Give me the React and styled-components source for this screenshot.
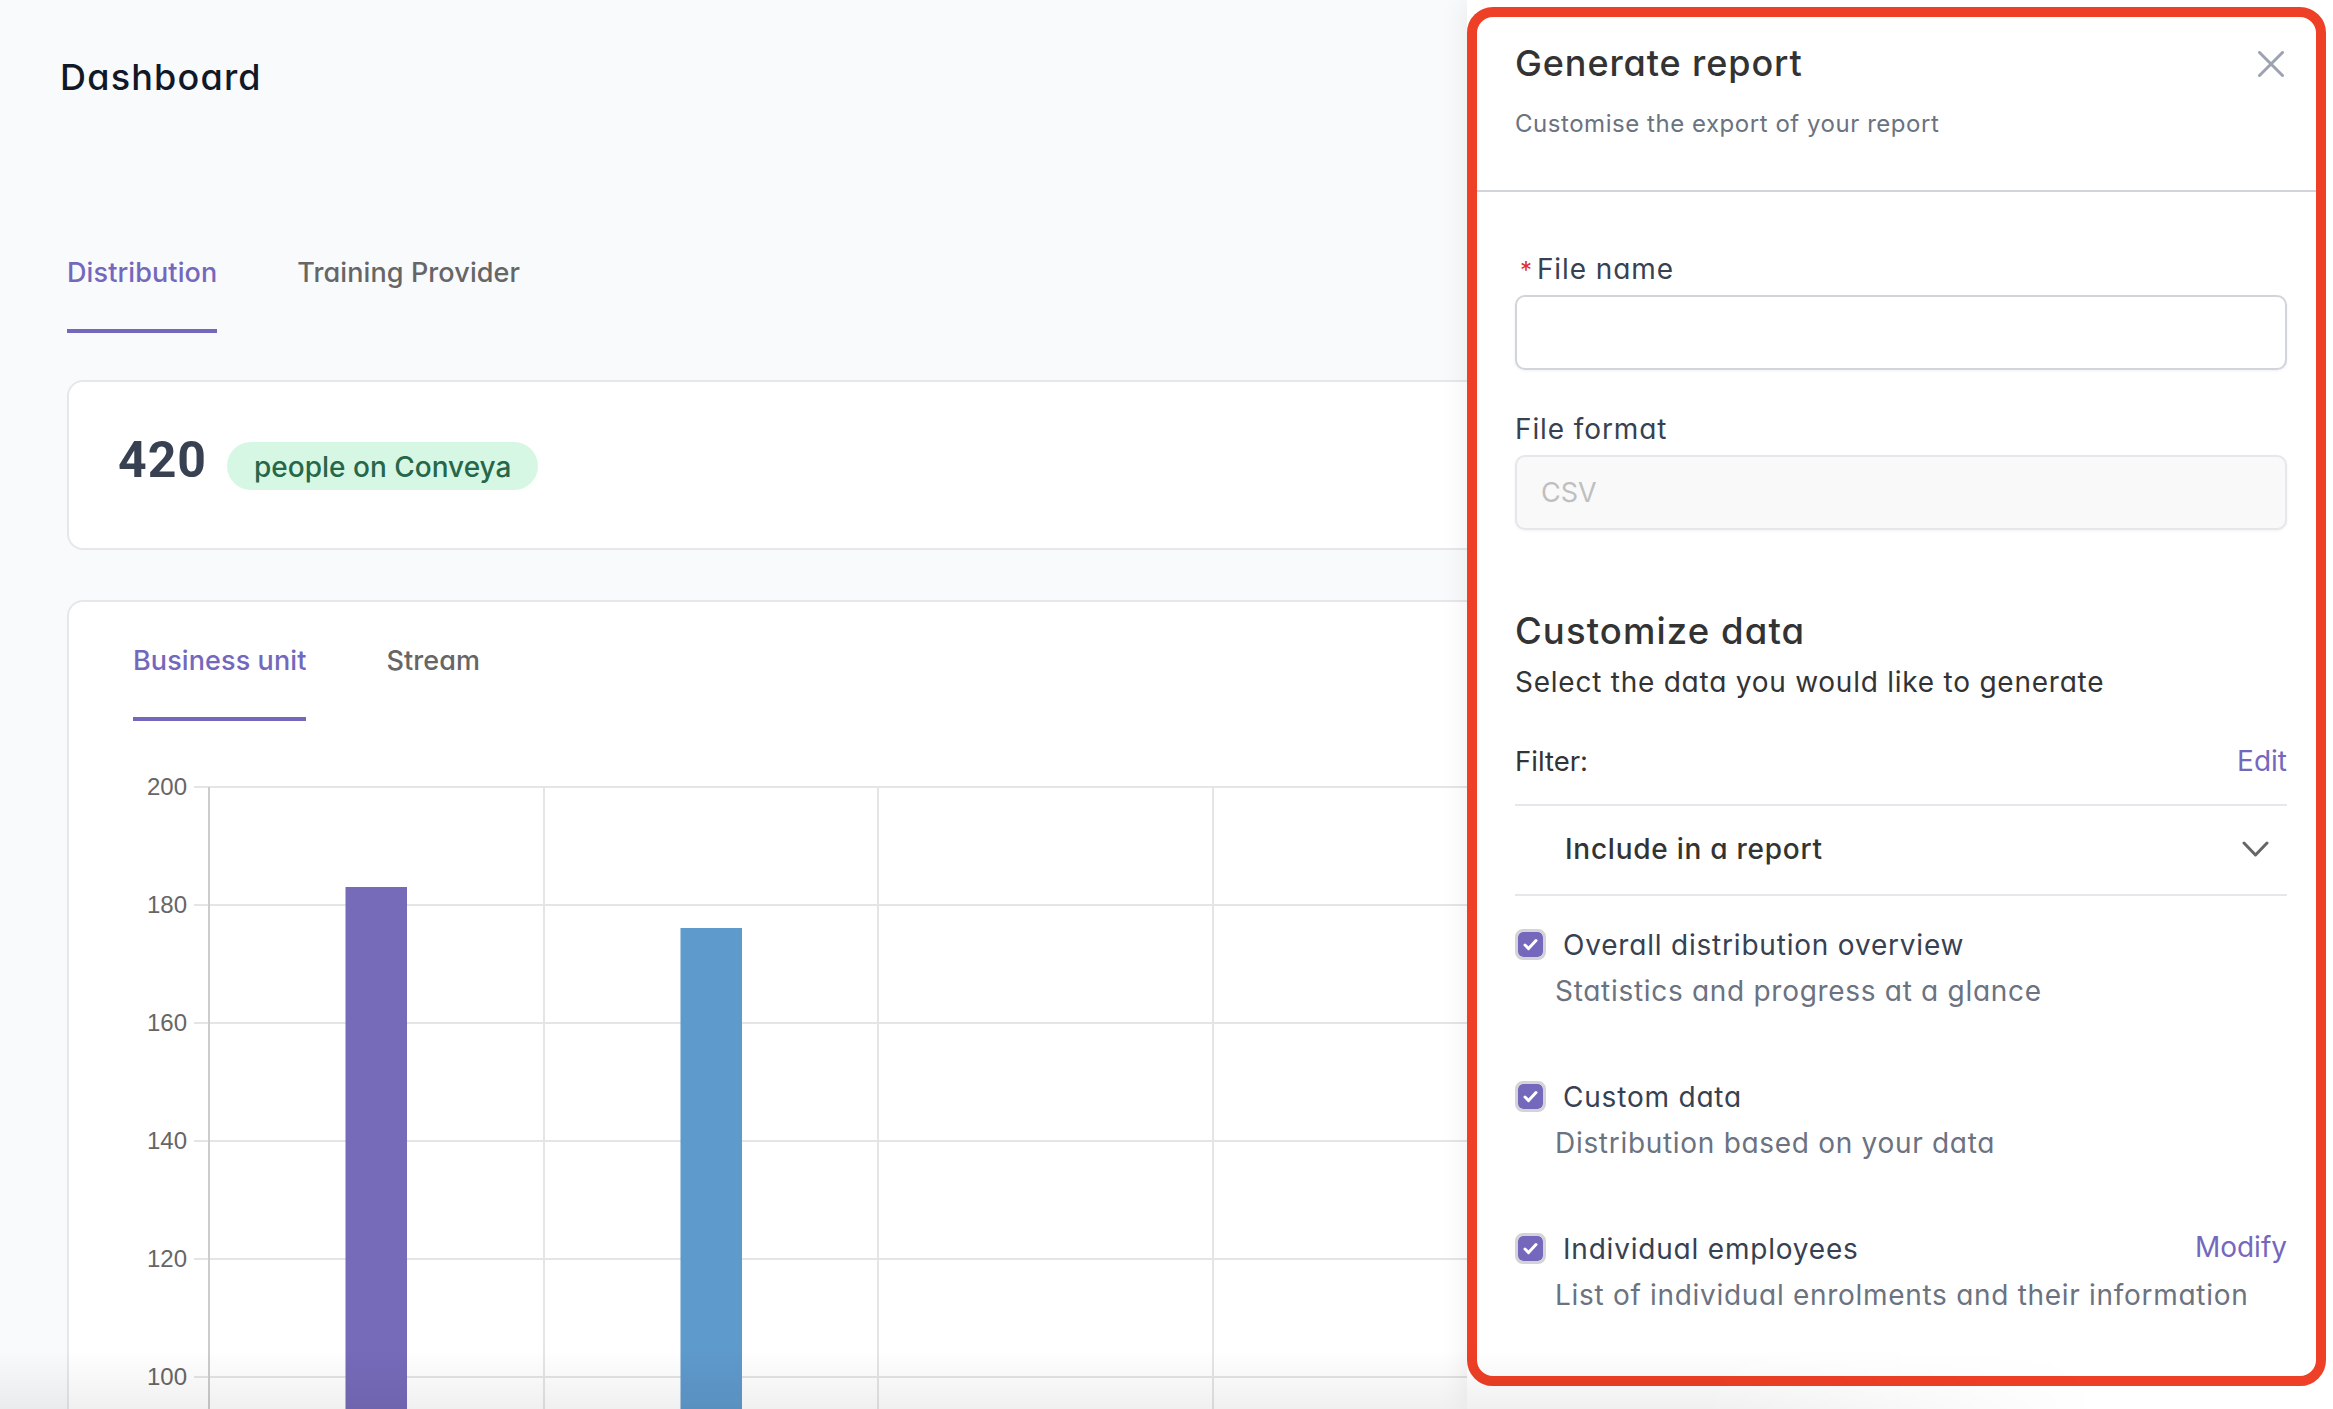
import React from "react";
import styled, { createGlobalStyle } from "styled-components";

const PURPLE = "#7468bd";

const GlobalStyle = createGlobalStyle`
  html, body {
    margin: 0;
    padding: 0;
    background: #f9fafc;
    overflow: hidden;
  }
  body {
    font-family: Inter, "Noto Sans", sans-serif;
    font-feature-settings: "cv11" 1;
  }
  #root {
    height: 1409px;
  }
`;

const Page = styled.div`
  position: relative;
  width: 2333px;
  height: 1409px;
  overflow: hidden;
  background: #f9fafc;
`;

const Main = styled.main`
  padding: 50px 833px 0 60px;
  box-sizing: border-box;
  height: 1409px;
  overflow: hidden;
`;

const Title = styled.h1`
  margin: 0;
  font-size: 36px;
  line-height: 54px;
  font-weight: 500;
  letter-spacing: 1.2px;
  color: #111827;
`;

const Tabs = styled.div`
  display: flex;
  gap: 80px;
  margin: ${p => p.$margin};
`;

const Tab = styled.div`
  height: 36px;
  padding-bottom: 38px;
  line-height: 36px;
  font-size: 27px;
  font-weight: 500;
  letter-spacing: 0.1px;
  white-space: nowrap;
  color: ${p => (p.$active ? PURPLE : "#666666")};
  border-bottom: 4px solid ${p => (p.$active ? PURPLE : "transparent")};
`;

const Card = styled.section`
  margin-left: 7px;
  background: #fff;
  border: 2px solid #e5e7eb;
  border-radius: 16px;
  box-sizing: border-box;
`;

const StatCard = styled(Card)`
  display: flex;
  align-items: baseline;
  margin-top: 47px;
  height: 170px;
  padding: 49px 0 0 49px;
`;

const StatNumber = styled.span`
  font-family: Roboto, Inter, sans-serif;
  font-size: 50px;
  line-height: 58px;
  font-weight: 700;
  letter-spacing: 1px;
  color: #374151;
`;

const StatPill = styled.span`
  margin-left: 20px;
  padding: 0 27px;
  height: 48px;
  line-height: 51px;
  border-radius: 24px;
  font-size: 28px;
  font-weight: 500;
  font-feature-settings: normal;
  background: #d7f7e5;
  color: #276749;
  white-space: nowrap;
`;

const ChartCard = styled(Card)`
  margin-top: 50px;
  height: 900px;
  padding: 41px 0 0 64px;
`;

const ChartSvg = styled.svg`
  display: block;
  margin: 40px 0 0 -64px;
`;

const AxisLabel = styled.text`
  font-family: "Liberation Sans", Arial, sans-serif;
  font-size: 24px;
  font-feature-settings: normal;
  fill: #666666;
`;

const Panel = styled.aside`
  position: absolute;
  top: 0;
  right: 0;
  bottom: 0;
  left: 1467px;
  background: #fff;
  box-shadow: -6px 0 22px rgba(0, 0, 0, 0.05);
`;

const Highlight = styled.div`
  box-sizing: border-box;
  width: 859px;
  height: 1379px;
  margin-top: 7px;
  border: 10px solid #ee4026;
  border-radius: 26px;
`;

const PanelHeader = styled.header`
  box-sizing: border-box;
  height: 175px;
  padding: 23px 30px 0 38px;
  border-bottom: 2px solid #d1d5db;
`;

const HeaderRow = styled.div`
  display: flex;
  align-items: center;
  justify-content: space-between;
`;

const PanelTitle = styled.h2`
  margin: 0;
  font-size: 36px;
  line-height: 46px;
  font-weight: 500;
  letter-spacing: 0.9px;
  color: #333333;
`;

const CloseIcon = styled.svg`
  display: block;
  margin: 1px 2px 0 0;
`;

const PanelSubtitle = styled.p`
  margin: 20px 0 0;
  font-size: 24px;
  line-height: 36px;
  letter-spacing: 0.54px;
  color: #6b7280;
`;

const PanelBody = styled.div`
  padding: 59px 29px 0 38px;
`;

const FieldLabel = styled.label`
  display: block;
  margin-top: ${p => p.$top || 0}px;
  padding-left: ${p => (p.$required ? 5 : 0)}px;
  font-size: 28px;
  line-height: 36px;
  letter-spacing: 0.9px;
  color: #374151;
`;

const Required = styled.span`
  margin-right: 4px;
  color: #e02d2d;
  font-size: 24px;
`;

const TextInput = styled.input`
  display: block;
  box-sizing: border-box;
  width: 100%;
  height: 75px;
  margin-top: ${p => p.$top}px;
  padding: 0 24px;
  border: 2px solid ${p => (p.disabled ? "#e5e7eb" : "#d1d5db")};
  border-radius: 10px;
  background: ${p => (p.disabled ? "#f9f9f9" : "#fff")};
  box-shadow: 0 1px 3px rgba(0, 0, 0, 0.06);
  font-family: inherit;
  font-feature-settings: inherit;
  font-size: 27px;
  color: #bfbfbf;
  -webkit-text-fill-color: #bfbfbf;
  opacity: 1;
`;

const SectionTitle = styled.h3`
  margin: 76px 0 0;
  font-size: 36.5px;
  line-height: 50px;
  font-weight: 500;
  letter-spacing: 1.1px;
  color: #333333;
`;

const SectionText = styled.p`
  margin: 6px 0 0;
  font-size: 28px;
  line-height: 40px;
  letter-spacing: 0.76px;
  color: #333333;
`;

const FilterRow = styled.div`
  display: flex;
  justify-content: space-between;
  margin-top: 41px;
  padding-bottom: 25px;
  border-bottom: 2px solid #e5e7eb;
  font-size: 27.5px;
  line-height: 36px;
  color: #333333;
`;

const LinkText = styled.a`
  color: ${PURPLE};
  font-size: 28px;
  line-height: 36px;
  letter-spacing: 0;
  margin-top: ${p => p.$shift || 0}px;
  margin-left: ${p => (p.$push ? "auto" : 0)};
`;

const IncludeRow = styled.div`
  box-sizing: border-box;
  display: flex;
  align-items: center;
  justify-content: space-between;
  height: 90px;
  padding: 0 18px 2px 50px;
  border-bottom: 2px solid #e5e7eb;
  font-size: 28px;
  font-weight: 500;
  letter-spacing: 0.74px;
  color: #333333;
`;

const OptionList = styled.div`
  display: flex;
  flex-direction: column;
  gap: 70px;
  margin-top: 31px;
`;

const OptionHead = styled.div`
  display: flex;
  align-items: center;
  gap: 17px;
  font-size: 28px;
  line-height: 36px;
  letter-spacing: 0.8px;
  color: #374151;
`;

const CheckBox = styled.span`
  box-sizing: border-box;
  display: flex;
  align-items: center;
  justify-content: center;
  flex: none;
  width: 31px;
  height: 31px;
  margin-top: -2px;
  border: 3px solid #d4d4d8;
  border-radius: 8px;
  background: ${PURPLE};
  background-clip: padding-box;
`;

const OptionText = styled.p`
  margin: 10px 0 0 40px;
  font-size: 28px;
  line-height: 36px;
  letter-spacing: 0.7px;
  color: #6b7280;
  white-space: nowrap;
`;

const BottomShade = styled.div`
  position: absolute;
  left: 0;
  right: 0;
  bottom: 0;
  height: 60px;
  background: linear-gradient(to top, rgba(0, 0, 0, 0.06), rgba(0, 0, 0, 0));
  mask-image: linear-gradient(to right, #000 1700px, transparent 2100px);
  pointer-events: none;
`;

// page coordinates minus the svg's own origin
const ORIGIN_X = 69;
const ORIGIN_Y = 761;
const ticks = [200, 180, 160, 140, 120, 100];
const gridColumns = [544, 878, 1213];
const bars = [
  { x: 345.5, top: 887, color: "#766bb9" },
  { x: 680.5, top: 928, color: "#5f9acc" },
];

function Chart() {
  return (
    <ChartSvg width="1430" height="648" viewBox={`${ORIGIN_X} ${ORIGIN_Y} 1430 648`}>
      {ticks.map((tick, i) => {
        const y = 787 + i * 118;
        return (
          <g key={tick}>
            <line x1="194" x2="1499" y1={y} y2={y} stroke="#e5e5e5" strokeWidth="2" />
            <AxisLabel x="187" y={y + 8} textAnchor="end">
              {tick}
            </AxisLabel>
          </g>
        );
      })}
      {gridColumns.map(x => (
        <line key={x} x1={x} x2={x} y1="787" y2="1409" stroke="#e5e5e5" strokeWidth="2" />
      ))}
      <line x1="209" x2="209" y1="787" y2="1409" stroke="#cccccc" strokeWidth="2" />
      {bars.map(bar => (
        <rect key={bar.x} x={bar.x} y={bar.top} width="61.5" height={1409 - bar.top} fill={bar.color} />
      ))}
    </ChartSvg>
  );
}

function Check() {
  return (
    <svg width="17" height="17" viewBox="0 0 17 17" fill="none">
      <path d="M3 9l3.6 3.6L14 4.6" stroke="#fff" strokeWidth="3" strokeLinecap="round" strokeLinejoin="round" />
    </svg>
  );
}

const options = [
  { title: "Overall distribution overview", text: "Statistics and progress at a glance" },
  { title: "Custom data", text: "Distribution based on your data" },
  { title: "Individual employees", text: "List of individual enrolments and their information", link: "Modify" },
];

function App() {
  return (
    <Page>
      <GlobalStyle />
      <Main>
        <Title>Dashboard</Title>
        <Tabs $margin="151px 0 0 7px">
          <Tab $active>Distribution</Tab>
          <Tab>Training Provider</Tab>
        </Tabs>
        <StatCard>
          <StatNumber>420</StatNumber>
          <StatPill>people on Conveya</StatPill>
        </StatCard>
        <ChartCard>
          <Tabs $margin="0">
            <Tab $active>Business unit</Tab>
            <Tab>Stream</Tab>
          </Tabs>
          <Chart />
        </ChartCard>
      </Main>
      <Panel>
        <Highlight>
          <PanelHeader>
            <HeaderRow>
              <PanelTitle>Generate report</PanelTitle>
              <CloseIcon width="26" height="26" viewBox="0 0 26 26" fill="none">
                <path d="M1.5 1.5l23 23M24.5 1.5l-23 23" stroke="#9ca3af" strokeWidth="3" strokeLinecap="round" />
              </CloseIcon>
            </HeaderRow>
            <PanelSubtitle>Customise the export of your report</PanelSubtitle>
          </PanelHeader>
          <PanelBody>
            <FieldLabel $required>
              <Required>*</Required>File name
            </FieldLabel>
            <TextInput $top={6} />
            <FieldLabel $top={41}>File format</FieldLabel>
            <TextInput $top={8} disabled value="CSV" readOnly />
            <SectionTitle>Customize data</SectionTitle>
            <SectionText>Select the data you would like to generate</SectionText>
            <FilterRow>
              <span>Filter:</span>
              <LinkText>Edit</LinkText>
            </FilterRow>
            <IncludeRow>
              <span>Include in a report</span>
              <svg width="27" height="16" viewBox="0 0 27 16" fill="none">
                <path d="M2 2l11.5 12L25 2" stroke="#666666" strokeWidth="3" strokeLinecap="round" strokeLinejoin="round" />
              </svg>
            </IncludeRow>
            <OptionList>
              {options.map(option => (
                <div key={option.title}>
                  <OptionHead>
                    <CheckBox>
                      <Check />
                    </CheckBox>
                    {option.title}
                    {option.link && (
                      <LinkText $push $shift={-4}>
                        {option.link}
                      </LinkText>
                    )}
                  </OptionHead>
                  <OptionText>{option.text}</OptionText>
                </div>
              ))}
            </OptionList>
          </PanelBody>
        </Highlight>
      </Panel>
      <BottomShade />
    </Page>
  );
}

export default App;
